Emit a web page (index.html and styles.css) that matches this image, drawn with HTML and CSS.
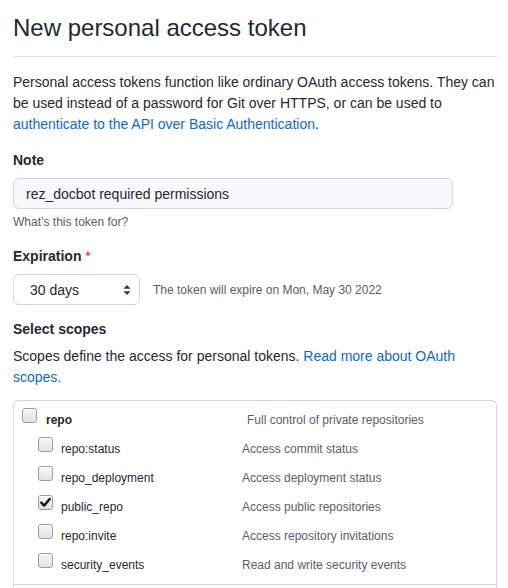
FILE: index.html
```html
<!DOCTYPE html>
<html lang="en">
<head>
<meta charset="utf-8">
<title>New personal access token</title>
<link rel="stylesheet" href="styles.css">
</head>
<body>
<main class="page">
  <div class="subhead">
    <h2 class="subhead-heading">New personal access token</h2>
  </div>
  <p class="intro">Personal access tokens function like ordinary OAuth access tokens. They can be used instead of a password for Git over HTTPS, or can be used to <a href="#">authenticate to the API over Basic Authentication</a>.</p>

  <div class="form-group note-group">
    <label class="label" for="note">Note</label>
    <input class="input" id="note" type="text" value="rez_docbot required permissions">
    <p class="hint">What’s this token for?</p>
  </div>

  <div class="form-group exp-group">
    <label class="label" for="exp">Expiration <span class="req">*</span></label>
    <div class="exp-row">
      <div class="select-wrap">
        <select class="select" id="exp">
          <option>30 days</option>
        </select>
        <svg class="select-arrow" width="8" height="10" viewBox="0 0 8 10" aria-hidden="true">
          <path d="M4 0 L7.6 3.8 L0.4 3.8 Z M0.4 6.2 L7.6 6.2 L4 10 Z" fill="#32383f"/>
        </svg>
      </div>
      <span class="exp-note">The token will expire on Mon, May 30 2022</span>
    </div>
  </div>

  <h3 class="label scopes-title">Select scopes</h3>
  <p class="scopes-desc">Scopes define the access for personal tokens. <a href="#">Read more about OAuth scopes.</a></p>

  <div class="scopes">
    <div class="scope-group">
      <div class="row top">
        <span class="cb"></span>
        <span class="name strong">repo</span>
        <span class="desc">Full control of private repositories</span>
      </div>
      <div class="row sub">
        <span class="cb"></span>
        <span class="name">repo:status</span>
        <span class="desc">Access commit status</span>
      </div>
      <div class="row sub">
        <span class="cb"></span>
        <span class="name">repo_deployment</span>
        <span class="desc">Access deployment status</span>
      </div>
      <div class="row sub">
        <span class="cb checked">
          <svg width="13" height="13" viewBox="0 0 13 13" aria-hidden="true"><path d="M2.3 6.6 L5.1 9.6 L10.8 2.9" fill="none" stroke="#1a1a1a" stroke-width="2.4" stroke-linecap="round" stroke-linejoin="round"/></svg>
        </span>
        <span class="name">public_repo</span>
        <span class="desc">Access public repositories</span>
      </div>
      <div class="row sub">
        <span class="cb"></span>
        <span class="name">repo:invite</span>
        <span class="desc">Access repository invitations</span>
      </div>
      <div class="row sub">
        <span class="cb"></span>
        <span class="name">security_events</span>
        <span class="desc">Read and write security events</span>
      </div>
    </div>
    <div class="scope-group next"></div>
  </div>
</main>
</body>
</html>
```

FILE: styles.css
```css
* { box-sizing: border-box; }

html, body {
  margin: 0;
  padding: 0;
  background: #ffffff;
}

body {
  font-family: "Liberation Sans", Arial, sans-serif;
  font-size: 14px;
  line-height: 21px;
  color: #24292f;
}

a {
  color: #0969da;
  text-decoration: none;
}

.page {
  width: 497px;
  padding-left: 13px;
}

.subhead {
  padding-top: 10px;
  padding-bottom: 10px;
  border-bottom: 1px solid #d8dee4;
}

.subhead-heading {
  margin: 0;
  font-size: 24px;
  font-weight: 400;
  line-height: 36px;
}

.intro {
  margin: 15px 0 0;
}

.form-group {
  margin: 0;
}

.note-group {
  margin-top: 15px;
}

.label {
  display: block;
  margin: 0 0 7px;
  font-size: 14px;
  font-weight: 700;
  line-height: 21px;
}

.req {
  color: #cf222e;
  font-weight: 400;
}

.input {
  display: block;
  width: 440px;
  height: 31px;
  margin: 0;
  padding: 0 12px;
  font-family: inherit;
  font-size: 14px;
  color: #24292f;
  background: #f6f8fa;
  border: 1px solid #d0d7de;
  border-radius: 6px;
  outline: none;
}

.hint {
  margin: 4px 0 0;
  font-size: 12px;
  line-height: 18px;
  color: #57606a;
}

.exp-group {
  margin-top: 15px;
}

.exp-row {
  display: flex;
  align-items: center;
  gap: 13px;
}

.select-wrap {
  position: relative;
  width: 127px;
  height: 31px;
}

.select {
  appearance: none;
  -webkit-appearance: none;
  display: block;
  width: 100%;
  height: 100%;
  margin: 0;
  padding: 0 24px 0 16px;
  font-family: inherit;
  font-size: 14px;
  color: #24292f;
  background: #ffffff;
  border: 1px solid #d0d7de;
  border-radius: 6px;
  outline: none;
}

.select-arrow {
  position: absolute;
  right: 9px;
  top: 11px;
  pointer-events: none;
}

.exp-note {
  font-size: 12px;
  line-height: 18px;
  color: #57606a;
}

.scopes-title {
  margin: 14px 0 0;
}

.scopes-desc {
  margin: 6px 0 0;
}

.scopes {
  margin-top: 12px;
  width: 484px;
  border: 1px solid #d0d7de;
  border-bottom: none;
  border-radius: 6px 6px 0 0;
}

.scope-group {
  padding: 3px 0 6px;
  border-bottom: 1px solid #d0d7de;
}

.scope-group.next {
  height: 40px;
  border-bottom: none;
}

.row {
  display: flex;
  align-items: flex-start;
  height: 29px;
  font-size: 12px;
  line-height: 16px;
}

.row.top { padding-left: 8px; }
.row.sub { padding-left: 24px; }

.cb {
  flex: none;
  width: 15px;
  height: 15px;
  margin-top: 4px;
  border: 1px solid #9c9c9c;
  border-radius: 3px;
  background: linear-gradient(#f7f7f7, #e2e2e2);
  box-shadow: inset 0 1px 0 #ffffff;
  display: flex;
  align-items: center;
  justify-content: center;
}

.name {
  flex: none;
  margin-top: 8px;
  margin-left: 8px;
  color: #24292f;
}

.row.top .name { width: 201px; margin-left: 9px; }
.row.sub .name { width: 181px; }

.strong { font-weight: 700; }

.desc {
  margin-top: 8px;
  color: #57606a;
}
```
